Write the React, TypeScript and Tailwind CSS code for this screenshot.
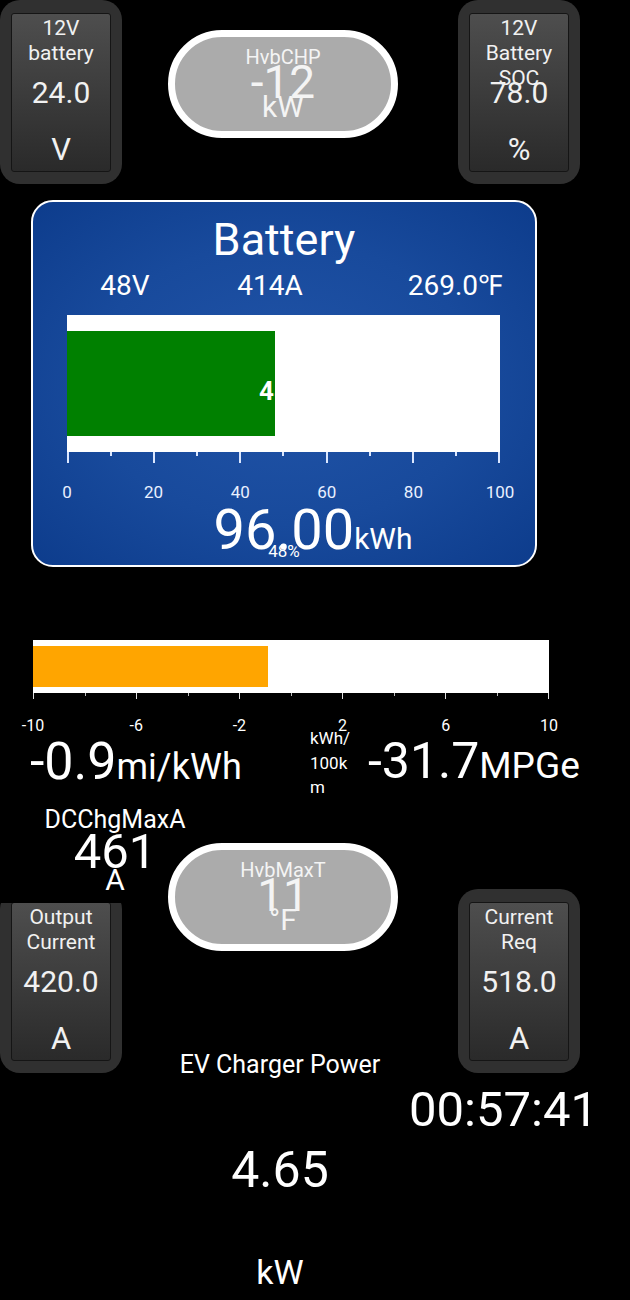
import React from "react";

type GaugeProps = { pos: string; label: string[]; value: string; unit: string };

function Gauge({ pos, label, value, unit }: GaugeProps) {
  return (
    <div className={`absolute ${pos} h-[184px] w-[122px] rounded-[20px] bg-[#303030] px-[11px] pt-[13px] pb-[12px]`}>
      <div className="relative h-full overflow-hidden rounded-[3px] border border-[#151515] bg-linear-to-b from-[#4e4e4e] via-[#3c3c3c] to-[#2a2a2a] text-center text-[#f1f1f1]">
        <div className="pt-[2px] text-[21px] leading-[25px]">
          {label.map((l) => (
            <div key={l}>{l}</div>
          ))}
        </div>
        <div className="absolute inset-x-0 top-[61px] text-[30px] leading-[36px]">{value}</div>
        <div className="absolute inset-x-0 top-[118px] text-[31px] leading-[36px]">{unit}</div>
      </div>
    </div>
  );
}

type PillProps = { pos: string; label: string; value: string; unit: string };

function Pill({ pos, label, value, unit }: PillProps) {
  return (
    <div className={`absolute ${pos} flex h-[108px] w-[230px] flex-col items-center rounded-full border-[7px] border-white bg-[#ababab] pt-[10px] text-[#f4f4f4]`}>
      <div className="text-[20px] leading-[20px]">{label}</div>
      <div className="text-[46px] leading-[30px]">{value}</div>
      <div className="text-[30px] leading-[20px]">{unit}</div>
    </div>
  );
}

const batteryTicks = Array.from({ length: 11 }, (_, i) => i);
const batteryLabels = ["0", "20", "40", "60", "80", "100"];
const effTicks = Array.from({ length: 11 }, (_, i) => i);
const effLabels = ["-10", "-6", "-2", "2", "6", "10"];

export default function App() {
  return (
    <div className="relative h-[1300px] w-[630px] overflow-hidden bg-black font-['Roboto',sans-serif] text-white">
      <Gauge pos="left-0 top-0" label={["12V", "battery"]} value="24.0" unit="V" />
      <Gauge pos="left-[458px] top-0" label={["12V", "Battery", "SOC"]} value="78.0" unit="%" />
      <Pill pos="left-[168px] top-[30px]" label="HvbCHP" value="-12" unit="kW" />

      {/* battery card */}
      <div className="absolute left-[31px] top-[200px] h-[367px] w-[506px] rounded-[22px] border-2 border-white bg-[radial-gradient(ellipse_at_center,#2154a8_0%,#184a9c_55%,#0d3c8c_100%)]">
        <div className="pt-[14px] text-center text-[45px] leading-[48px]">Battery</div>
        <div className="mt-[6px] flex text-[28px] leading-[32px]">
          <div className="w-[184px] text-center">48V</div>
          <div className="w-[106px] text-center">414A</div>
          <div className="flex-1 pr-[33px] text-right">269.0℉</div>
        </div>
        <div className="mt-[13px] ml-[34px] w-[433px]">
          <div className="relative h-[137px] bg-white py-[16px]">
            <div className="h-full w-[48%] bg-[#008000]" />
            <div className="absolute inset-0 flex items-center justify-center pt-[16px] text-[26px] font-bold">48%</div>
          </div>
          <div className="flex h-[11px] items-start justify-between">
            {batteryTicks.map((t) => (
              <div key={t} className={t % 2 === 0 ? "h-[11px] w-[2px] bg-[#dbe7ff]" : "h-[4px] w-[2px] bg-[#dbe7ff]"} />
            ))}
          </div>
          <div className="mt-[19px] flex justify-between text-[17px] leading-[20px] text-[#e9f0ff]">
            {batteryLabels.map((l) => (
              <div key={l} className="flex w-0 justify-center whitespace-nowrap">
                {l}
              </div>
            ))}
          </div>
        </div>
        <div className="flex items-baseline justify-center pl-[58px]">
          <span className="text-[56px] leading-[56px]">96.00</span>
          <span className="text-[30px] leading-[30px]">kWh</span>
        </div>
        <div className="absolute inset-x-0 top-[339px] text-center text-[17px] leading-[20px]">48%</div>
      </div>

      {/* efficiency bar */}
      <div className="absolute left-[33px] top-[640px] w-[516px]">
        <div className="h-[53px] bg-white py-[6px]">
          <div className="h-full w-[45.5%] bg-[#ffa500]" />
        </div>
        <div className="flex h-[6px] items-start justify-between">
          {effTicks.map((t) => (
            <div key={t} className={t % 2 === 0 ? "h-[6px] w-[1px] bg-[#e0e0e0]" : "h-[3px] w-[1px] bg-[#bdbdbd]"} />
          ))}
        </div>
        <div className="mt-[17px] flex justify-between text-[16px] leading-[20px]">
          {effLabels.map((l) => (
            <div key={l} className="flex w-0 justify-center whitespace-nowrap">
              {l}
            </div>
          ))}
        </div>
      </div>

      <div className="absolute left-[30px] top-[736px] flex items-baseline whitespace-nowrap">
        <span className="text-[52px] leading-none">-0.9</span>
        <span className="text-[36px] leading-none">mi/kWh</span>
      </div>
      <div className="absolute left-[310px] top-[726px] text-[17px] leading-[24.5px]">
        <div>kWh/</div>
        <div>100k</div>
        <div>m</div>
      </div>
      <div className="absolute left-[368px] top-[736px] flex items-baseline whitespace-nowrap">
        <span className="text-[50px] leading-none">-31.7</span>
        <span className="text-[37px] leading-none">MPGe</span>
      </div>

      <Gauge pos="left-0 top-[889px]" label={["Output", "Current"]} value="420.0" unit="A" />
      <Gauge pos="left-[458px] top-[889px]" label={["Current", "Req"]} value="518.0" unit="A" />

      {/* DC charge max widget */}
      <div className="absolute left-0 top-[805px] flex h-[98px] w-[230px] flex-col items-center bg-black">
        <div className="text-[25px] leading-[30px]">DCChgMaxA</div>
        <div className="text-[49px] leading-[34px]">461</div>
        <div className="text-[30px] leading-[22px]">A</div>
      </div>

      <Pill pos="left-[168px] top-[843px]" label="HvbMaxT" value="11" unit="°F" />

      {/* EV charger power */}
      <div className="absolute left-[150px] top-[1050px] flex w-[260px] flex-col items-center">
        <div className="text-[25px] leading-[30px]">EV Charger Power</div>
        <div className="mt-[60px] text-[50px] leading-[60px]">4.65</div>
        <div className="mt-[52px] text-[34px] leading-[40px]">kW</div>
      </div>

      <div className="absolute left-[409px] top-[1081px] text-[49px] leading-[58px]">00:57:41</div>
    </div>
  );
}
